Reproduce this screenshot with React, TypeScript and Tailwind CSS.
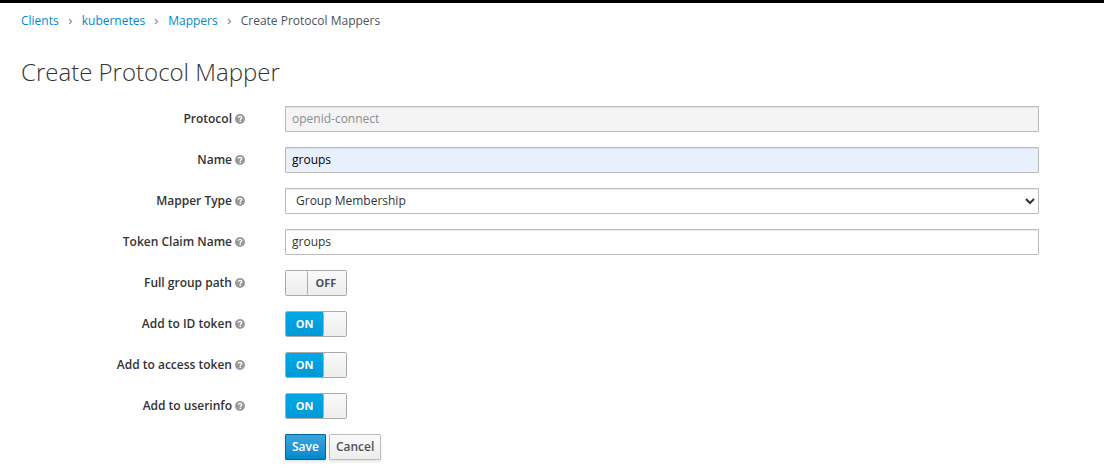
import { useState } from "react";
import type { ReactNode } from "react";
import { FaAngleRight } from "react-icons/fa";

const field =
  "block h-[26px] w-full rounded-[1px] border border-[#bababa] px-1.5 pb-0.5 text-[12px] leading-4 shadow-[inset_0_1px_1px_rgba(0,0,0,0.075)] outline-none focus:border-[#0088ce]";

function HelpIcon() {
  return (
    <svg viewBox="0 0 20 20" className="size-[10px]" aria-hidden="true">
      <circle cx="10" cy="10" r="10" fill="#999999" />
      <path
        d="M6.6 7.6C6.8 5.6 8.2 4.6 10 4.6c2 0 3.4 1.1 3.4 2.8 0 2.3-2.9 2.3-2.9 4.4"
        fill="none"
        stroke="#ffffff"
        strokeWidth="2.6"
      />
      <rect x="9" y="13.2" width="3" height="2.8" fill="#ffffff" />
    </svg>
  );
}

function Row({ id, label, children }: { id: string; label: string; children: ReactNode }) {
  return (
    <div className="flex items-center gap-10">
      <div className="flex w-[224px] shrink-0 items-center justify-end gap-[3px]">
        <label htmlFor={id} className="font-semibold">
          {label}
        </label>
        <HelpIcon />
      </div>
      <div className="min-w-0 flex-1">{children}</div>
    </div>
  );
}

function Toggle({ id, initial }: { id: string; initial: boolean }) {
  const [on, setOn] = useState(initial);
  return (
    <label className="relative flex h-[26px] w-[62px] cursor-pointer overflow-hidden rounded-[2px] border border-[#aaaaaa] text-[11px] font-bold">
      <input
        id={id}
        type="checkbox"
        checked={on}
        onChange={(e) => setOn(e.target.checked)}
        className="absolute inset-0 m-0 cursor-pointer opacity-0"
      />
      {on ? (
        <>
          <span className="flex flex-1 items-center justify-center bg-linear-to-b from-[#00a8e8] to-[#0099d6] text-white">
            ON
          </span>
          <span className="w-[23px] rounded-l-[2px] border-l border-[#aaaaaa] bg-linear-to-b from-[#fafafa] to-[#ededed]" />
        </>
      ) : (
        <>
          <span className="w-[22px] rounded-r-[2px] border-r border-[#aaaaaa] bg-linear-to-b from-[#fafafa] to-[#ededed]" />
          <span className="flex flex-1 items-center justify-center bg-linear-to-b from-[#fafafa] to-[#ededed] pr-0.5 text-[#4d5258]">
            OFF
          </span>
        </>
      )}
    </label>
  );
}

const crumbs = ["Clients", "kubernetes", "Mappers"];

const toggles = [
  { id: "full-path", label: "Full group path", on: false },
  { id: "id-token", label: "Add to ID token", on: true },
  { id: "access-token", label: "Add to access token", on: true },
  { id: "userinfo", label: "Add to userinfo", on: true },
];

export default function App() {
  return (
    <div className="min-h-screen border-t-[3px] border-black bg-white font-['Open_Sans',sans-serif] text-[12px] leading-5 text-[#333333]">
      <main className="px-[21px] pt-2">
        <nav aria-label="Breadcrumb">
          <ol className="flex items-center">
            {crumbs.map((c) => (
              <li key={c} className="flex items-center">
                <a href="#" className="text-[#0088ce] hover:underline">
                  {c}
                </a>
                <FaAngleRight className="mx-[7px] size-[9px] text-[#9c9c9c]" aria-hidden="true" />
              </li>
            ))}
            <li className="text-[#4d5258]">Create Protocol Mappers</li>
          </ol>
        </nav>
        <h1 className="mt-7 text-[24px] leading-[26px] font-light">Create Protocol Mapper</h1>
        <form className="mt-[21px] flex flex-col gap-[15px] pr-11 pb-2" onSubmit={(e) => e.preventDefault()}>
          <Row id="protocol" label="Protocol">
            <input id="protocol" disabled defaultValue="openid-connect" className={`${field} bg-[#f4f4f4] text-[#8b8d8f]`} />
          </Row>
          <Row id="name" label="Name">
            <input id="name" defaultValue="groups" className={`${field} bg-[#e8f0fe] text-black`} />
          </Row>
          <Row id="mapper-type" label="Mapper Type">
            <select id="mapper-type" defaultValue="Group Membership" className={`${field} bg-white pr-0`}>
              <option>Group Membership</option>
              <option>User Attribute</option>
              <option>Audience</option>
            </select>
          </Row>
          <Row id="claim" label="Token Claim Name">
            <input id="claim" defaultValue="groups" className={`${field} bg-white`} />
          </Row>
          {toggles.map((t) => (
            <Row key={t.id} id={t.id} label={t.label}>
              <Toggle id={t.id} initial={t.on} />
            </Row>
          ))}
          <div className="flex gap-[3px] pl-[264px]">
            <button
              type="submit"
              className="h-[26px] rounded-[1px] border border-[#00659c] bg-linear-to-b from-[#39a5dc] to-[#0088ce] px-1.5 font-semibold text-white shadow-[0_2px_3px_rgba(3,3,3,0.1)]"
            >
              Save
            </button>
            <button
              type="button"
              className="h-[26px] rounded-[1px] border border-[#bbbbbb] bg-linear-to-b from-[#fafafa] to-[#ededed] px-1.5 font-semibold text-[#4d5258] shadow-[0_2px_3px_rgba(3,3,3,0.1)]"
            >
              Cancel
            </button>
          </div>
        </form>
      </main>
    </div>
  );
}
